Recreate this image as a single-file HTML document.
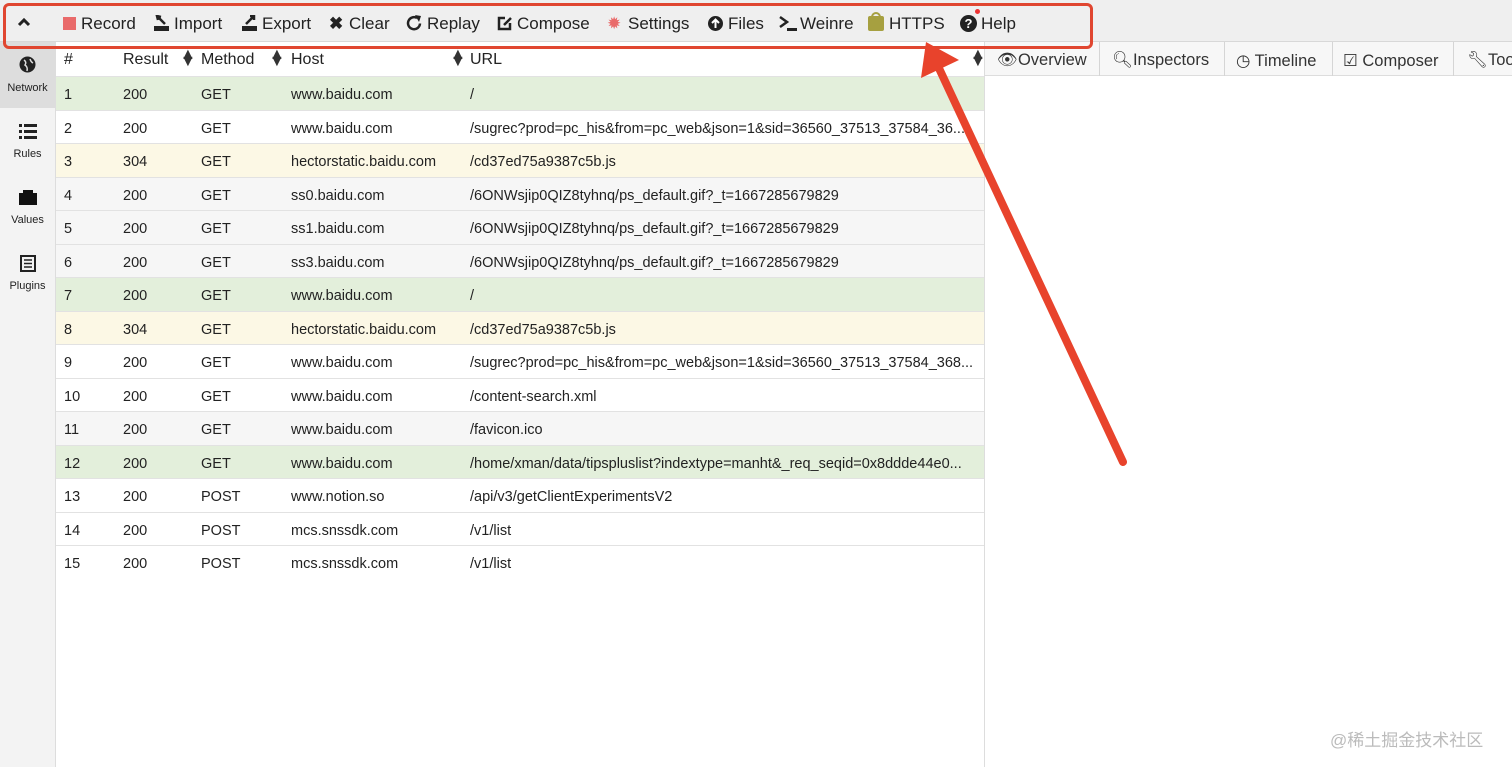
<!DOCTYPE html>
<html><head><meta charset="utf-8"><style>
*{box-sizing:border-box;margin:0;padding:0}
body{width:1512px;height:767px;overflow:hidden;background:#fff;font-family:"Liberation Sans",Arial,sans-serif;color:#222;position:relative}
.tb{position:absolute;left:0;top:0;width:1512px;height:42px;background:#efefef;border-bottom:1px solid #d8d8d8}
.tb span{position:absolute;top:14px;font-size:17px;color:#222;white-space:nowrap}
.tb svg{position:absolute}
.side{position:absolute;left:0;top:42px;width:56px;height:725px;background:#f3f3f3;border-right:1px solid #ddd}
.side div{position:absolute;left:0;width:55px;text-align:center;font-size:11px;color:#222}
.tbl{position:absolute;left:56px;top:42px;width:929px;height:725px;border-right:1px solid #ddd}
.row{position:absolute;left:0;width:928px;height:33.5px;border-bottom:1px solid #e2e2e2;font-size:14.5px}
.row span{position:absolute;top:10px;white-space:nowrap}
.g{background:#e3efdb}.y{background:#fcf8e5}.s{background:#f6f6f6}
.hd span{font-size:16px;top:9px}
.sa{position:absolute;font-size:10px;line-height:7px;top:11px;color:#333}
.tabs{position:absolute;left:985px;top:42px;width:527px;height:34px;background:#f7f7f7;border-bottom:1px solid #ddd}
.tabs span{position:absolute;top:9px;font-size:16.5px;color:#333;white-space:nowrap}
.tabs i{position:absolute;top:0;width:1px;height:34px;background:#d5d5d5}
</style></head><body>
<div class="tb">
<svg style="left:17px;top:17px" width="14" height="10"><path d="M2 8 L7 3 L12 8" stroke="#222" stroke-width="3" fill="none"/></svg>
<span style="left:63px;top:17px;width:13px;height:13px;background:#e96a6a"></span><span style="left:81px">Record</span>
<svg style="left:153px;top:15px" width="16" height="17"><path d="M4 1 L12 9 M8 2 L4 1 L5 5" stroke="#222" stroke-width="2.5" fill="none"/><rect x="1" y="11" width="15" height="5" fill="#222"/></svg><span style="left:174px">Import</span>
<svg style="left:241px;top:15px" width="16" height="17"><path d="M5 9 L13 1 M9 1 L13 1 L13 5" stroke="#222" stroke-width="2.5" fill="none"/><rect x="1" y="11" width="15" height="5" fill="#222"/></svg><span style="left:262px">Export</span>
<span style="left:329px;font-weight:bold">✖</span><span style="left:349px">Clear</span>
<svg style="left:406px;top:15px" width="17" height="17"><path d="M14 8.5 A6 6 0 1 1 11 3" stroke="#222" stroke-width="2.5" fill="none"/><path d="M9 0 L15 1 L13 7 Z" fill="#222"/></svg><span style="left:427px">Replay</span>
<svg style="left:496px;top:15px" width="17" height="17"><path d="M9 3 H3 V14 H14 V8" stroke="#222" stroke-width="2.5" fill="none"/><path d="M8 10 L15 3" stroke="#222" stroke-width="2.5"/></svg><span style="left:517px">Compose</span>
<span style="left:607px;color:#e96a6a">✹</span><span style="left:628px">Settings</span>
<svg style="left:707px;top:15px" width="17" height="17"><circle cx="8.5" cy="8.5" r="7.5" fill="#222"/><path d="M8.5 13 V5 M5 8 L8.5 4.5 L12 8" stroke="#fff" stroke-width="2" fill="none"/></svg><span style="left:728px">Files</span>
<svg style="left:779px;top:15px" width="20" height="17"><path d="M1 2 L8 7 L1 12" stroke="#222" stroke-width="2.5" fill="none"/><rect x="8" y="13" width="10" height="3" fill="#222"/></svg><span style="left:800px">Weinre</span>
<span style="left:868px;top:16px;width:16px;height:15px;background:#a6a040;border-radius:2px"></span><span style="left:871px;top:12px;width:10px;height:8px;border:2px solid #a6a040;border-bottom:none;border-radius:5px 5px 0 0"></span><span style="left:889px">HTTPS</span>
<span style="left:960px;width:17px;height:17px;top:15px;background:#222;border-radius:50%;color:#fff;font-size:13px;text-align:center;line-height:17px;font-weight:bold">?</span><span style="left:975px;top:9px;width:5px;height:5px;background:#e33;border-radius:50%"></span><span style="left:981px">Help</span>
</div>
<div class="side">
<div style="top:0;height:66px;background:#ddd"></div>
<div style="top:14px"><svg width="17" height="17"><circle cx="8.5" cy="8.5" r="8" fill="#222"/><path d="M5 4 Q8 6 6 9 Q9 11 8 15 M11 3 Q12 6 14 7" stroke="#ddd" stroke-width="1.5" fill="none"/></svg></div><div style="top:40px">Network</div>
<div style="top:82px"><svg width="18" height="15"><g fill="#222"><rect x="0" y="0" width="3" height="3"/><rect x="0" y="6" width="3" height="3"/><rect x="0" y="12" width="3" height="3"/><rect x="5" y="0" width="13" height="3"/><rect x="5" y="6" width="13" height="3"/><rect x="5" y="12" width="13" height="3"/></g></svg></div><div style="top:106px">Rules</div>
<div style="top:148px"><svg width="18" height="15"><rect x="0" y="3" width="18" height="12" fill="#111"/><rect x="4" y="0" width="10" height="3" fill="#111"/></svg></div><div style="top:172px">Values</div>
<div style="top:213px"><svg width="16" height="17"><rect x="1" y="1" width="14" height="15" fill="none" stroke="#222" stroke-width="2"/><path d="M4 5H12M4 8.5H12M4 12H12" stroke="#222" stroke-width="1.5"/></svg></div><div style="top:238px">Plugins</div>
</div>
<div class="tbl">
<div class="row hd" style="top:0;height:35px;background:#fff"><span style="left:8px">#</span><span style="left:67px">Result</span><span class="sa" style="left:124px">▲<br>▼</span><span style="left:145px">Method</span><span class="sa" style="left:213px">▲<br>▼</span><span style="left:235px">Host</span><span class="sa" style="left:394px">▲<br>▼</span><span style="left:414px">URL</span><span class="sa" style="left:914px">▲<br>▼</span></div>
<div class="row g" style="top:35px"><span style="left:8px">1</span><span style="left:67px">200</span><span style="left:145px">GET</span><span style="left:235px">www.baidu.com</span><span style="left:414px">/</span></div>
<div class="row" style="top:68.5px"><span style="left:8px">2</span><span style="left:67px">200</span><span style="left:145px">GET</span><span style="left:235px">www.baidu.com</span><span style="left:414px">/sugrec?prod=pc_his&amp;from=pc_web&amp;json=1&amp;sid=36560_37513_37584_36...</span></div>
<div class="row y" style="top:102px"><span style="left:8px">3</span><span style="left:67px">304</span><span style="left:145px">GET</span><span style="left:235px">hectorstatic.baidu.com</span><span style="left:414px">/cd37ed75a9387c5b.js</span></div>
<div class="row s" style="top:135.5px"><span style="left:8px">4</span><span style="left:67px">200</span><span style="left:145px">GET</span><span style="left:235px">ss0.baidu.com</span><span style="left:414px">/6ONWsjip0QIZ8tyhnq/ps_default.gif?_t=1667285679829</span></div>
<div class="row s" style="top:169px"><span style="left:8px">5</span><span style="left:67px">200</span><span style="left:145px">GET</span><span style="left:235px">ss1.baidu.com</span><span style="left:414px">/6ONWsjip0QIZ8tyhnq/ps_default.gif?_t=1667285679829</span></div>
<div class="row s" style="top:202.5px"><span style="left:8px">6</span><span style="left:67px">200</span><span style="left:145px">GET</span><span style="left:235px">ss3.baidu.com</span><span style="left:414px">/6ONWsjip0QIZ8tyhnq/ps_default.gif?_t=1667285679829</span></div>
<div class="row g" style="top:236px"><span style="left:8px">7</span><span style="left:67px">200</span><span style="left:145px">GET</span><span style="left:235px">www.baidu.com</span><span style="left:414px">/</span></div>
<div class="row y" style="top:269.5px"><span style="left:8px">8</span><span style="left:67px">304</span><span style="left:145px">GET</span><span style="left:235px">hectorstatic.baidu.com</span><span style="left:414px">/cd37ed75a9387c5b.js</span></div>
<div class="row" style="top:303px"><span style="left:8px">9</span><span style="left:67px">200</span><span style="left:145px">GET</span><span style="left:235px">www.baidu.com</span><span style="left:414px">/sugrec?prod=pc_his&amp;from=pc_web&amp;json=1&amp;sid=36560_37513_37584_368...</span></div>
<div class="row" style="top:336.5px"><span style="left:8px">10</span><span style="left:67px">200</span><span style="left:145px">GET</span><span style="left:235px">www.baidu.com</span><span style="left:414px">/content-search.xml</span></div>
<div class="row s" style="top:370px"><span style="left:8px">11</span><span style="left:67px">200</span><span style="left:145px">GET</span><span style="left:235px">www.baidu.com</span><span style="left:414px">/favicon.ico</span></div>
<div class="row g" style="top:403.5px"><span style="left:8px">12</span><span style="left:67px">200</span><span style="left:145px">GET</span><span style="left:235px">www.baidu.com</span><span style="left:414px">/home/xman/data/tipspluslist?indextype=manht&amp;_req_seqid=0x8ddde44e0...</span></div>
<div class="row" style="top:437px"><span style="left:8px">13</span><span style="left:67px">200</span><span style="left:145px">POST</span><span style="left:235px">www.notion.so</span><span style="left:414px">/api/v3/getClientExperimentsV2</span></div>
<div class="row" style="top:470.5px"><span style="left:8px">14</span><span style="left:67px">200</span><span style="left:145px">POST</span><span style="left:235px">mcs.snssdk.com</span><span style="left:414px">/v1/list</span></div>
<div class="row" style="top:504px;border-bottom:none"><span style="left:8px">15</span><span style="left:67px">200</span><span style="left:145px">POST</span><span style="left:235px">mcs.snssdk.com</span><span style="left:414px">/v1/list</span></div>
</div>
<div class="tabs">
<span style="left:12px">👁Overview</span><i style="left:114px"></i>
<span style="left:127px">🔍︎Inspectors</span><i style="left:239px"></i>
<span style="left:251px">◷ Timeline</span><i style="left:347px"></i>
<span style="left:358px">☑ Composer</span><i style="left:468px"></i>
<span style="left:482px">🔧︎Tools</span>
</div>
<div style="position:absolute;left:1330px;top:726px;font-size:17px;color:#bbb;font-family:'Liberation Sans','Noto Sans CJK SC',sans-serif">@稀土掘金技术社区</div>
<div style="position:absolute;left:3px;top:3px;width:1090px;height:46px;border:3px solid #e04630;border-radius:6px"></div>
<svg style="position:absolute;left:0;top:0" width="1512" height="767"><line x1="1123" y1="462" x2="937" y2="64" stroke="#e8432c" stroke-width="8" stroke-linecap="round"/><polygon points="926,42 921,78 959,60" fill="#e8432c"/></svg>
</body></html>
